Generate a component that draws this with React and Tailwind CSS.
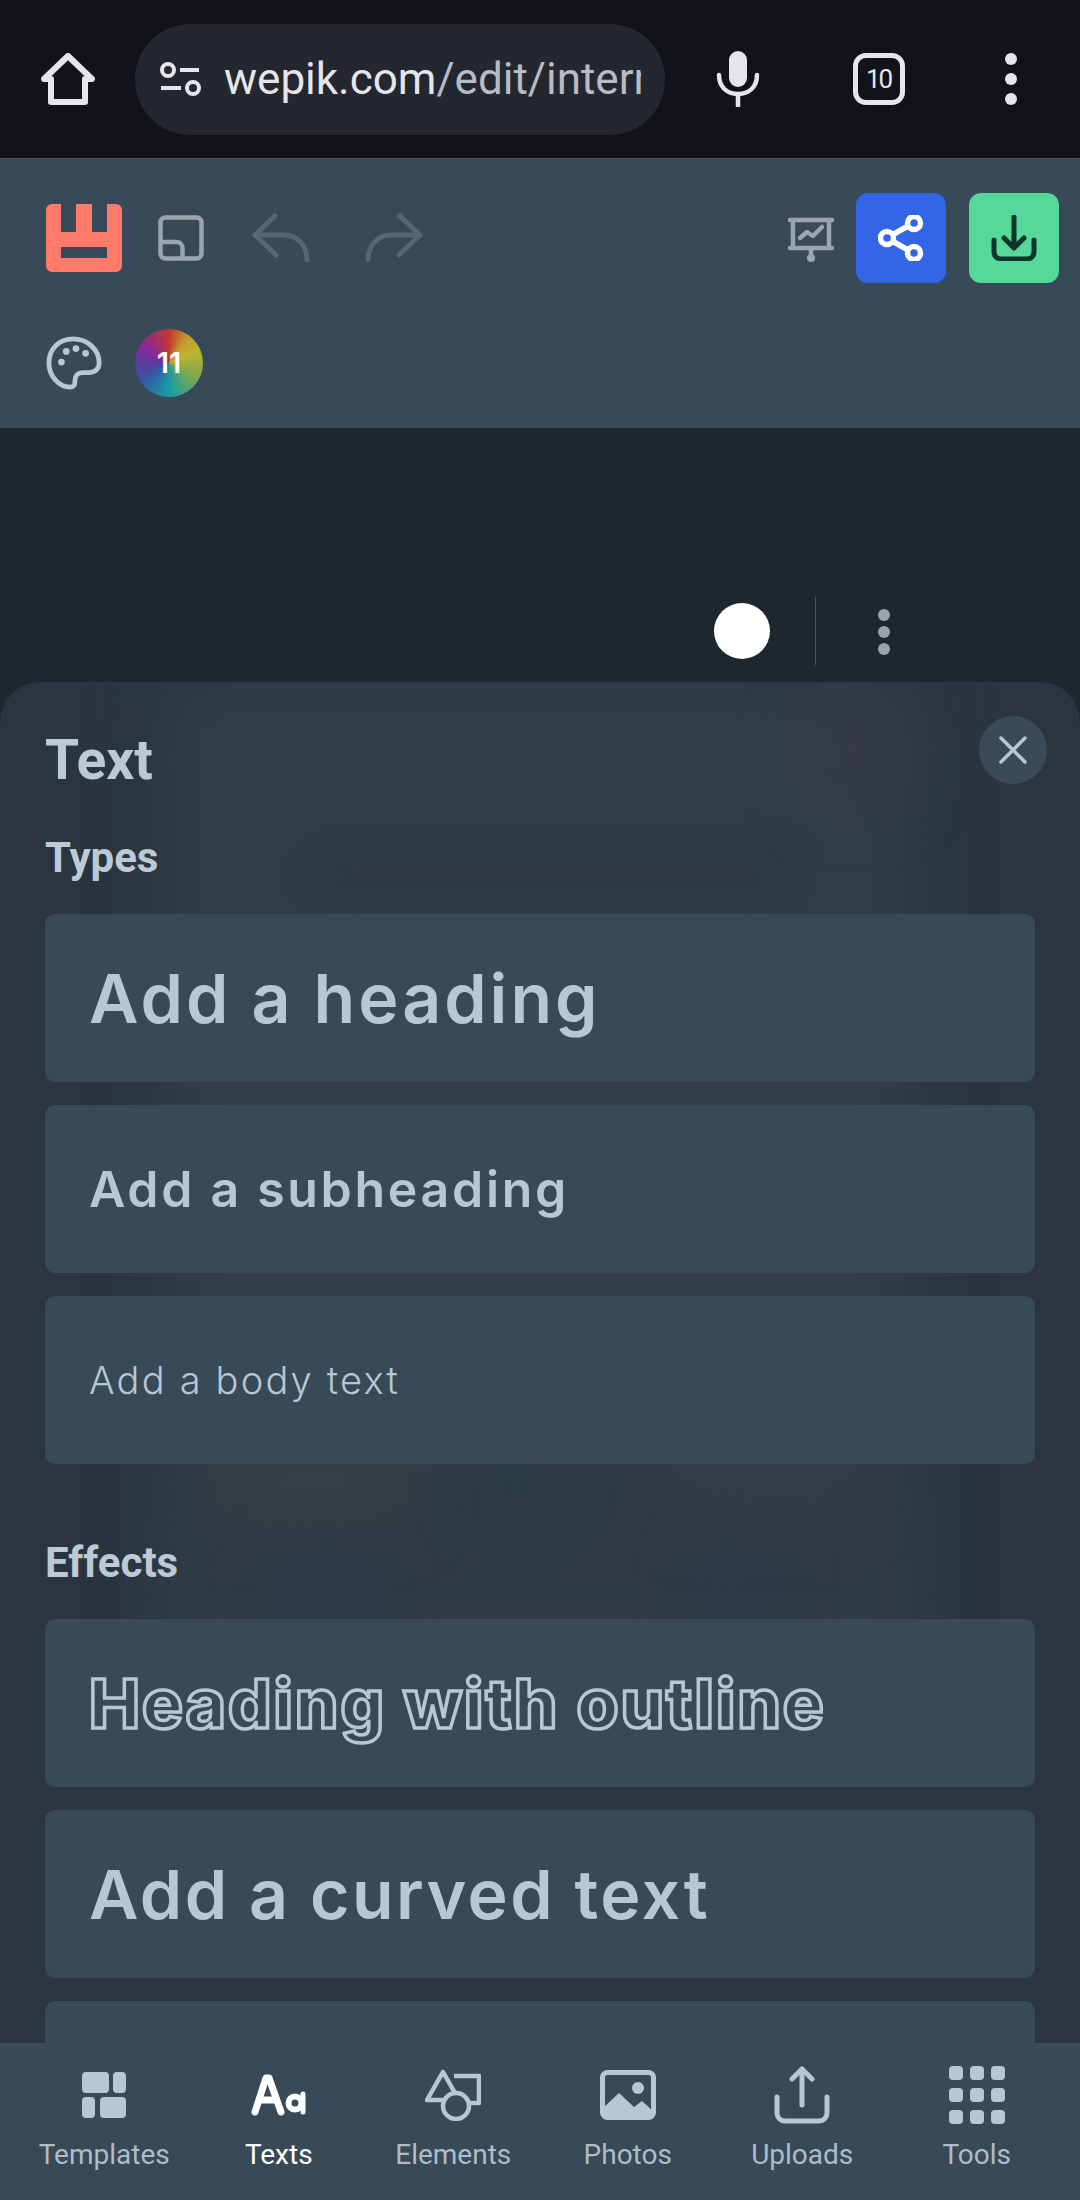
import React from "react";

const Card = ({ children }) => (
  <div className="h-[168px] rounded-[10px] bg-[#384957] pl-[44px] flex items-center whitespace-nowrap text-[#b8c7d4] font-['Inter',sans-serif]">
    {children}
  </div>
);

const Label = ({ children, className = "" }) => (
  <div className={"font-['Roboto',sans-serif] font-bold text-[#bccad5] " + className}>{children}</div>
);

const NavItem = ({ label, active, icon }) => (
  <div className="w-[174.5px] flex flex-col items-center">
    <div className="h-[60px] flex items-center justify-center">{icon}</div>
    <div className={"font-['Roboto',sans-serif] text-[28px] leading-[32px] mt-[14px] " + (active ? "text-white" : "text-[#aebdca]")}>{label}</div>
  </div>
);

const c = "#b8c7d4";

export default function App() {
  return (
    <div className="w-[1080px] h-[2200px] overflow-hidden flex flex-col bg-[#1e272e]">
      {/* browser bar */}
      <div className="h-[158px] bg-[#111318] flex items-center shrink-0 relative">
        <div className="w-[135px] flex justify-center">
          <svg width="54" height="52" viewBox="0 0 54 52" fill="none" stroke="#e6e6ea" strokeWidth="6" strokeLinejoin="round" strokeLinecap="round">
            <path d="M3 26 27 3l24 23h-7v23H10V26z" />
          </svg>
        </div>
        <div className="w-[530px] h-[111px] rounded-full bg-[#23272f] flex items-center pl-[24px] overflow-hidden">
          <svg width="44" height="36" viewBox="0 0 44 36" fill="none" stroke="#e6e6ea" strokeWidth="4" className="shrink-0">
            <circle cx="9" cy="9" r="6" />
            <path d="M21 9h19M2 27h20" />
            <circle cx="34" cy="27" r="6" />
          </svg>
          <div className="ml-[21px] w-[417px] overflow-hidden whitespace-nowrap font-['Roboto',sans-serif] text-[44px] leading-[60px]">
            <span className="text-[#e6e6ea]">wepik.com</span><span className="text-[#b9bcc4]">/edit/internal</span>
          </div>
        </div>
        <div className="w-[145px] flex justify-center">
          <svg width="44" height="56" viewBox="0 0 44 56" fill="none">
            <rect x="13" y="0" width="18" height="36" rx="9" fill="#e6e6ea" />
            <path d="M3 24c0 12 8 19 19 19s19-7 19-19M22 43v13" stroke="#e6e6ea" strokeWidth="4.5" strokeLinecap="round" />
          </svg>
        </div>
        <div className="w-[137px] flex justify-center">
          <div className="w-[52px] h-[52px] rounded-[13px] border-[5px] border-[#e6e6ea] flex items-center justify-center font-['Roboto',sans-serif] text-[26px] text-[#e6e6ea] tracking-[-2px]">10</div>
        </div>
        <div className="flex-1 flex flex-col items-center gap-[8px] pr-[6px]">
          <span className="w-[12px] h-[12px] rounded-full bg-[#e6e6ea]" />
          <span className="w-[12px] h-[12px] rounded-full bg-[#e6e6ea]" />
          <span className="w-[12px] h-[12px] rounded-full bg-[#e6e6ea]" />
        </div>
      </div>

      {/* toolbar */}
      <div className="h-[270px] bg-[#384957] shrink-0 border-t border-[#4a5560] flex flex-col pl-[46px] pr-[21px]">
        <div className="flex items-center h-[90px] mt-[34px]">
          <svg width="76" height="68" viewBox="0 0 76 68">
            <path fillRule="evenodd" fill="#ff7a68" d="M6 0h9v28h15V0h16v28h15V0h9a6 6 0 0 1 6 6v56a6 6 0 0 1-6 6H6a6 6 0 0 1-6-6V6a6 6 0 0 1 6-6zM15 43v11h46V43z" />
          </svg>
          <svg className="ml-[36px]" width="46" height="46" viewBox="0 0 46 46" fill="none" stroke="#9aa6af" strokeWidth="4.5">
            <rect x="2.5" y="2.5" width="41" height="41" rx="5" />
            <path d="M2.5 27h16a6 6 0 0 1 6 6v10" />
          </svg>
          <svg className="ml-[48px]" width="58" height="50" viewBox="0 0 58 50" fill="none" stroke="#566673" strokeWidth="5" strokeLinecap="round" strokeLinejoin="round">
            <path d="M23 3 3 22l21 20M3 22h29c13 0 23 10 23 25" />
          </svg>
          <svg className="ml-[55px]" width="58" height="50" viewBox="0 0 58 50" fill="none" stroke="#566673" strokeWidth="5" strokeLinecap="round" strokeLinejoin="round">
            <path d="M35 3l20 19-21 20M55 22H26C13 22 3 32 3 47" />
          </svg>
          <div className="flex-1" />
          <svg width="46" height="46" viewBox="0 0 46 46" fill="none" stroke="#9aa6af" strokeWidth="4.5" strokeLinecap="round" strokeLinejoin="round" className="mr-[22px] mt-[4px]">
            <path d="M2 3h42M2 31h42M5 3v28M41 3v28M23 31v8" />
            <path d="M12 21l7-6 6 4 9-9" />
            <circle cx="23" cy="41" r="4" fill="#9aa6af" stroke="none" />
          </svg>
          <div className="w-[90px] h-[90px] rounded-[12px] bg-[#3366e6] flex items-center justify-center">
            <svg width="46" height="46" viewBox="0 0 46 46" fill="none" stroke="#fff" strokeWidth="5.5">
              <circle cx="9" cy="23" r="6.5" />
              <circle cx="36" cy="8" r="6.5" />
              <circle cx="36" cy="38" r="6.5" />
              <path d="M15 19.5 30 11M15 26.5 30 35" />
            </svg>
          </div>
          <div className="w-[90px] h-[90px] rounded-[12px] bg-[#55d89a] flex items-center justify-center ml-[23px]">
            <svg width="46" height="46" viewBox="0 0 46 46" fill="none" stroke="#10332b" strokeWidth="5" strokeLinecap="round" strokeLinejoin="round">
              <path d="M23 2v30M13 23l10 10 10-10" />
              <path d="M3 25v12a7 7 0 0 0 7 7h26a7 7 0 0 0 7-7V25" />
            </svg>
          </div>
        </div>
        <div className="flex items-center mt-[46px]">
          <svg width="56" height="56" viewBox="0 0 58 56" fill="none" stroke={c} strokeWidth="5">
            <path d="M28 3C13 3 3 14 3 28c0 14 11 25 22 25 5 0 5-4 5-7 0-5 3-8 8-8h6c8 0 11-5 11-10C55 14 43 3 28 3z" />
            <circle cx="16" cy="27" r="3.5" fill={c} stroke="none" />
            <circle cx="21" cy="16" r="3.5" fill={c} stroke="none" />
            <circle cx="31" cy="13" r="3.5" fill={c} stroke="none" />
            <circle cx="41" cy="18" r="3.5" fill={c} stroke="none" />
          </svg>
          <div className="ml-[33px] w-[68px] h-[68px] rounded-full flex items-center justify-center bg-[conic-gradient(from_0deg,#c0392f,#c49a2c_10%,#bfb52f_18%,#7fa84c_33%,#179ba4_50%,#3559a8_65%,#5a3a9a_75%,#8a2a94_85%,#c0392f)]">
            <span className="font-['Inter',sans-serif] font-semibold text-[29px] text-white">11</span>
          </div>
        </div>
      </div>

      {/* canvas */}
      <div className="h-[254px] shrink-0 flex items-start">
        <div className="ml-[714px] mt-[175px] w-[56px] h-[56px] rounded-full bg-white" />
        <div className="ml-[45px] mt-[169px] w-px h-[68px] bg-[#46535e]" />
        <div className="ml-[62px] mt-[181px] flex flex-col gap-[5px]">
          <span className="w-[12px] h-[12px] rounded-full bg-[#9aa3aa]" />
          <span className="w-[12px] h-[12px] rounded-full bg-[#9aa3aa]" />
          <span className="w-[12px] h-[12px] rounded-full bg-[#9aa3aa]" />
        </div>
      </div>

      {/* sheet */}
      <div className="relative h-[1361px] shrink-0 overflow-hidden rounded-t-[40px] bg-[#2a3540] px-[45px]">
        <div className="absolute inset-0 pointer-events-none">
          <div className="absolute left-[170px] top-0 w-[740px] h-[1000px] bg-[#323f4a] blur-[35px]" />
          <div className="absolute left-[290px] top-[150px] w-[520px] h-[90px] bg-[#2e3944] blur-[30px]" />
          <div className="absolute left-[810px] top-[10px] w-[90px] h-[110px] bg-[#363948] blur-[30px]" />
          <div className="absolute left-[170px] top-[780px] w-[740px] h-[170px] bg-[#303b46] blur-[25px]" />
          <div className="absolute left-[220px] top-[760px] w-[190px] h-[80px] bg-[#383f43] blur-[30px]" />
          <div className="absolute left-[470px] top-[760px] w-[90px] h-[80px] bg-[#2b3c44] blur-[25px]" />
          <div className="absolute left-[680px] top-[760px] w-[170px] h-[80px] bg-[#373b49] blur-[30px]" />
          <div className="absolute left-[270px] top-[870px] w-[110px] h-[70px] bg-[#2e3b4b] blur-[25px]" />
          <div className="absolute left-[690px] top-[870px] w-[90px] h-[70px] bg-[#2d3a4a] blur-[25px]" />
        </div>
        <div className="relative">
          <div className="flex items-start justify-between">
            <Label className="text-[55px] leading-[60px] mt-[48px]">Text</Label>
            <div className="w-[68px] h-[68px] -mr-[12px] mt-[34px] rounded-full bg-[#3a4a58] flex items-center justify-center">
              <svg width="30" height="30" viewBox="0 0 30 30" fill="none" stroke={c} strokeWidth="3.5" strokeLinecap="round">
                <path d="M3 3l24 24M27 3 3 27" />
              </svg>
            </div>
          </div>
          <Label className="text-[42px] leading-[50px] mt-[43px] mb-[31px]">Types</Label>
          <div className="flex flex-col gap-[23px]">
            <Card><span className="text-[68px] font-semibold tracking-[3px]">Add a heading</span></Card>
            <Card><span className="text-[50px] font-semibold tracking-[2.7px]">Add a subheading</span></Card>
            <Card><span className="text-[38px] font-light tracking-[2.2px]">Add a body text</span></Card>
          </div>
          <Label className="text-[42px] leading-[50px] mt-[74px] mb-[31px]">Effects</Label>
          <div className="flex flex-col gap-[23px]">
            <Card><span className="text-[68px] font-extrabold tracking-[2.2px] text-[#384957] [-webkit-text-stroke:3.5px_#b8c7d4]">Heading with outline</span></Card>
            <Card><span className="text-[68px] font-semibold tracking-[2.4px]">Add a curved text</span></Card>
            <Card />
          </div>
        </div>
      </div>

      {/* nav */}
      <div className="h-[157px] shrink-0 bg-[#384957] flex items-start pt-[22px] pl-[17px]">
        <NavItem label="Templates" icon={
          <svg width="44" height="46" viewBox="0 0 44 46" fill={c}>
            <rect x="0" y="0" width="27" height="21" rx="4" />
            <rect x="31" y="0" width="13" height="21" rx="4" />
            <rect x="0" y="25" width="13" height="21" rx="4" />
            <rect x="18" y="25" width="26" height="21" rx="4" />
          </svg>
        } />
        <NavItem active label="Texts" icon={
          <svg width="56" height="44" viewBox="0 0 56 44" fill="none" stroke="#fff" strokeLinecap="round" strokeLinejoin="round">
            <path d="M4 39 15 5h3l12 34M9 27h16" strokeWidth="7" />
            <circle cx="44" cy="30" r="6.5" strokeWidth="6" />
            <path d="M52 21v18" strokeWidth="5" />
          </svg>
        } />
        <NavItem label="Elements" icon={
          <svg width="56" height="52" viewBox="0 0 56 52" fill="none" stroke={c} strokeWidth="4.5" strokeLinejoin="round">
            <path d="M18 3 2 31h32z" fill="#384957" />
            <path d="M29 7h25v27H34" />
            <circle cx="31" cy="37" r="13" fill="#384957" />
          </svg>
        } />
        <NavItem label="Photos" icon={
          <svg width="56" height="50" viewBox="0 0 56 50" fill="none">
            <rect x="2.5" y="2.5" width="51" height="45" rx="5" stroke={c} strokeWidth="5" />
            <circle cx="38" cy="18" r="6" fill={c} />
            <path d="M3 38 19 23l15 14 8-6 12 11v6H3z" fill={c} />
          </svg>
        } />
        <NavItem label="Uploads" icon={
          <svg width="56" height="58" viewBox="0 0 56 58" fill="none" stroke={c} strokeWidth="5" strokeLinecap="round" strokeLinejoin="round">
            <path d="M28 39V3M18 13 28 3l10 10" />
            <path d="M3 31v16a8 8 0 0 0 8 8h34a8 8 0 0 0 8-8V31" />
          </svg>
        } />
        <NavItem label="Tools" icon={
          <svg width="56" height="58" viewBox="0 0 56 58" fill={c}>
            <rect x="0" y="0" width="14" height="14" rx="4" /><rect x="21" y="0" width="14" height="14" rx="4" /><rect x="42" y="0" width="14" height="14" rx="4" />
            <rect x="0" y="22" width="14" height="14" rx="4" /><rect x="21" y="22" width="14" height="14" rx="4" /><rect x="42" y="22" width="14" height="14" rx="4" />
            <rect x="0" y="44" width="14" height="14" rx="4" /><rect x="21" y="44" width="14" height="14" rx="4" /><rect x="42" y="44" width="14" height="14" rx="4" />
          </svg>
        } />
      </div>
    </div>
  );
}
